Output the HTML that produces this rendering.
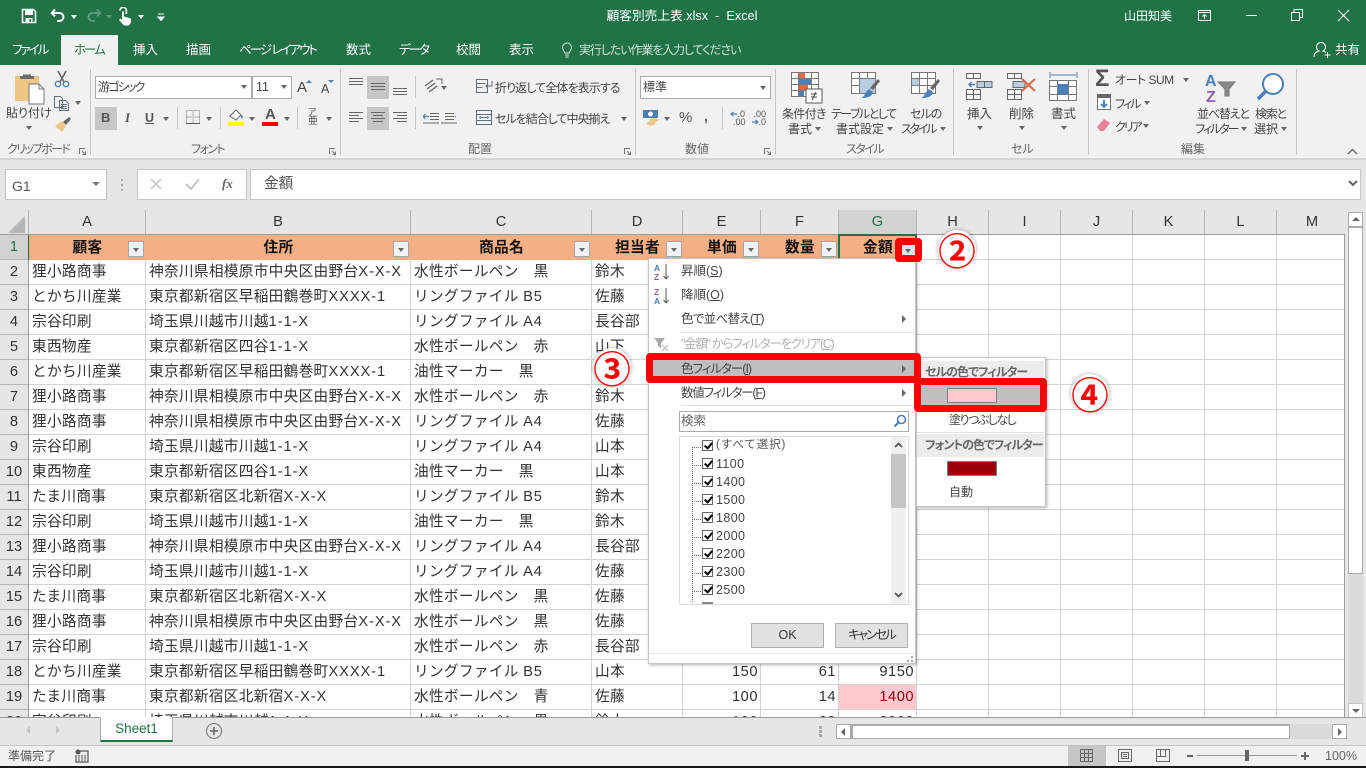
<!DOCTYPE html>
<html lang="ja"><head><meta charset="utf-8"><title>顧客別売上表.xlsx - Excel</title>
<style>
html,body{margin:0;padding:0}
body{width:1366px;height:768px;overflow:hidden;position:relative;background:#e6e6e6;font-family:"Liberation Sans","Noto Sans CJK JP",sans-serif;color:#444}
.a,.t,svg.i{position:absolute}
.t{white-space:nowrap;line-height:16px;font-size:12.5px;font-feature-settings:"palt";color:#444}
.w{color:#fff}
.g{color:#666;font-size:12px}
.c{text-align:center;transform:translateX(-50%)}
.box{position:absolute;background:#fff;border:1px solid #ababab;box-sizing:border-box}
.sep{position:absolute;background:#c6c6c6;width:1px}
.dd{position:absolute;width:0;height:0;border-left:3.5px solid transparent;border-right:3.5px solid transparent;border-top:4px solid #666}
.act{position:absolute;background:#c6c6c6}
table{position:absolute;left:29px;top:235px;border-collapse:separate;border-spacing:0;table-layout:fixed;width:1316px}
td{height:25px;box-sizing:border-box;border-right:1px solid #d4d4d4;border-bottom:1px solid #d4d4d4;padding:0 3px;font-size:14.67px;letter-spacing:.3px;line-height:24px;color:#333;white-space:nowrap;overflow:hidden}
td i{font-style:normal;letter-spacing:.9px}
td.n{text-align:right;padding-right:2px;letter-spacing:.5px}
tr.h td{background:#f4b084;border-right:none;border-bottom:none;font-weight:bold;text-align:center;color:#111}
tr.h td.e{background:#fff;border-right:1px solid #d4d4d4;border-bottom:1px solid #d4d4d4}
.ch{position:absolute;top:210px;height:24px;background:#e6e6e6;border-right:1px solid #b4b4b4;box-sizing:content-box;text-align:center;font-size:14.67px;line-height:24px;color:#333}
.rh{position:absolute;left:0;width:28px;height:24px;border-bottom:1px solid #b4b4b4;background:#e6e6e6;text-align:center;font-size:14.67px;line-height:24px;color:#333}
.fb{position:absolute;top:241px;width:16px;height:16px;box-sizing:border-box;background:#f1f2f7;border:1px solid #a5a5a5}
.fb:after{content:"";position:absolute;left:3.5px;top:5.5px;border-left:3.5px solid transparent;border-right:3.5px solid transparent;border-top:4px solid #666}
.red{position:absolute;border:solid #f00;box-sizing:border-box;border-radius:4px}
.num{position:absolute;width:38px;height:38px;border-radius:50%;background:#fff;box-shadow:0 0 4px rgba(0,0,0,.35);text-align:center;font-size:37.5px;line-height:38px;font-weight:bold;color:#f00;font-family:"Noto Sans CJK JP",sans-serif}
.m{position:absolute;left:681px;white-space:nowrap;line-height:16px;font-size:12.5px;font-feature-settings:"palt";color:#444}
.ck{position:absolute;left:702px;width:11px;height:11px;box-sizing:border-box;border:1px solid #666;background:#fff}
.ck:after{content:"";position:absolute;left:3px;top:0;width:3px;height:6px;border:solid #000;border-width:0 2px 2px 0;transform:rotate(40deg)}
.li{position:absolute;left:716px;font-size:12.5px;line-height:16px;letter-spacing:.4px;color:#444}
.dot{position:absolute;left:692px;width:9px;height:0;border-top:1px dotted #666}
.btn{position:absolute;top:623px;width:73px;height:25px;box-sizing:border-box;background:#e1e1e1;border:1px solid #adadad;text-align:center;font-size:12.5px;line-height:23px;color:#333;font-feature-settings:"palt"}
</style></head><body>

<!-- title bar -->
<div class="a" style="left:0;top:0;width:1366px;height:65px;background:#217346"></div>
<svg class="i" style="left:21px;top:8px" width="16" height="16" viewBox="0 0 16 16"><path d="M1.5 1.5h11l2 2v11h-13z" fill="none" stroke="#fff" stroke-width="1.6"/><rect x="4" y="2" width="8" height="5" fill="#fff"/><rect x="4.5" y="10" width="7" height="4.5" fill="#fff"/><rect x="8.5" y="11" width="1.5" height="3" fill="#217346"/></svg>
<svg class="i" style="left:50px;top:8px" width="16" height="16" viewBox="0 0 16 16"><path d="M5 1.5L1.800 5 5 8.300M2 5h7.500a3.800 3.800 0 0 1 0 8H7" fill="none" stroke="#fff" stroke-width="2"/></svg>
<div class="dd" style="left:71px;top:15px;border-top-color:#fff"></div>
<svg class="i" style="left:86px;top:8px" width="16" height="16" viewBox="0 0 16 16"><path d="M11 1.500L14.200 5 11 8.300M14 5H6.500a3.800 3.800 0 0 0 0 8H9" fill="none" stroke="#5c9a7b" stroke-width="2"/></svg>
<div class="dd" style="left:106px;top:15px;border-top-color:#5c9a7b"></div>
<svg class="i" style="left:117px;top:7px" width="18" height="19" viewBox="0 0 18 19"><path d="M3 3.500a3.200 3.200 0 0 1 6.400 0V7" fill="none" stroke="#fff" stroke-width="1.600"/><path d="M5 4.500h2v5l7 2v4l-2 3H7L2 13l1-1.500 2 1z" fill="#fff"/></svg>
<div class="dd" style="left:138px;top:15px;border-top-color:#fff"></div>
<svg class="i" style="left:157px;top:13px" width="8" height="8" viewBox="0 0 8 8"><path d="M1 1h6M1 4h6l-3 3.500z" fill="#fff" stroke="#fff" stroke-width="1"/></svg>
<div class="t w c" style="left:682px;top:8px;font-size:12.7px">顧客別売上表.xlsx&nbsp; - &nbsp;Excel</div>
<div class="t w" style="left:1124px;top:8px;font-size:12px">山田知美</div>
<svg class="i" style="left:1197px;top:9px" width="15" height="13" viewBox="0 0 15 13"><path d="M1.500 1.500h12v10h-12zM1.500 3.500h12M7.500 10V5.500M5.500 7.500l2-2 2 2" fill="none" stroke="#fff"/></svg>
<div class="a" style="left:1246px;top:15px;width:11px;height:1px;background:#fff"></div>
<svg class="i" style="left:1291px;top:9px" width="13" height="13" viewBox="0 0 13 13"><path d="M.5 3.500h8v8h-8zM3 3.500v-3h8.500v8H8.500" fill="none" stroke="#fff"/></svg>
<svg class="i" style="left:1337px;top:9px" width="13" height="13" viewBox="0 0 13 13"><path d="M1 1l11 11M12 1L1 12" stroke="#fff" stroke-width="1.100"/></svg>

<!-- tabs -->
<div class="a" style="left:61px;top:35px;width:57px;height:30px;background:#f1f1f1"></div>
<div class="t w" style="left:12px;top:42px;letter-spacing:-2px">ファイル</div>
<div class="t" style="left:74px;top:42px;color:#217346;letter-spacing:-2px">ホーム</div>
<div class="t w" style="left:133px;top:42px">挿入</div>
<div class="t w" style="left:186px;top:42px">描画</div>
<div class="t w" style="left:239px;top:42px;letter-spacing:-2px">ページ レイアウト</div>
<div class="t w" style="left:346px;top:42px">数式</div>
<div class="t w" style="left:399px;top:42px;letter-spacing:-2px">データ</div>
<div class="t w" style="left:456px;top:42px">校閲</div>
<div class="t w" style="left:509px;top:42px">表示</div>
<svg class="i" style="left:561px;top:42px" width="12" height="16" viewBox="0 0 12 16"><path d="M3.800 11C3.500 9 1.500 8 1.500 5.500a4.500 4.500 0 0 1 9 0C10.500 8 8.500 9 8.200 11zM4 13h4M4.500 15h3" fill="none" stroke="#d8e6df"/></svg>
<div class="t" style="left:579px;top:42px;color:#d3e3db;font-size:12px;letter-spacing:-1.1px">実行したい作業を入力してください</div>
<svg class="i" style="left:1313px;top:41px" width="19" height="17" viewBox="0 0 19 17"><path d="M1 16c0-4 3-5.500 5-6a4.500 4.500 0 1 1 4 0c1 .2 2 .7 3 1.500M11.500 14h6M14.500 11v6" fill="none" stroke="#fff"/></svg>
<div class="t w" style="left:1335px;top:42px">共有</div>

<!-- ribbon -->
<div class="a" style="left:0;top:65px;width:1366px;height:93px;background:#f1f1f1;border-bottom:2px solid #d5d5d5"></div>
<div class="sep" style="left:90px;top:69px;height:86px"></div>
<div class="sep" style="left:340px;top:69px;height:86px"></div>
<div class="sep" style="left:635px;top:69px;height:86px"></div>
<div class="sep" style="left:775px;top:69px;height:86px"></div>
<div class="sep" style="left:953px;top:69px;height:86px"></div>
<div class="sep" style="left:1088px;top:69px;height:86px"></div>
<div class="sep" style="left:1296px;top:69px;height:86px"></div>

<!-- clipboard -->
<svg class="i" style="left:14px;top:72px" width="32" height="33" viewBox="0 0 32 33"><rect x="1" y="4" width="24" height="25" rx="1" fill="#eec681"/><path d="M9 4V2.500h8V4h3v3H6V4z" fill="#6d6d6d"/><path d="M15 12h10l5 5v15H15z" fill="#fff" stroke="#777"/><path d="M25 12v5h5" fill="none" stroke="#777"/></svg>
<div class="t" style="left:6px;top:105px;font-size:12px">貼り付け</div>
<div class="dd" style="left:26px;top:126px"></div>
<svg class="i" style="left:54px;top:70px" width="16" height="18" viewBox="0 0 16 18"><path d="M4 1l6 11M12 1L6 12" stroke="#666" stroke-width="1.600"/><circle cx="4" cy="14" r="2.700" fill="none" stroke="#4a7fb8" stroke-width="1.400"/><circle cx="12" cy="14" r="2.700" fill="none" stroke="#4a7fb8" stroke-width="1.400"/></svg>
<svg class="i" style="left:54px;top:95px" width="16" height="16" viewBox="0 0 16 16"><path d="M.5 1.500h6l2 2v9h-8z M5.500 5.500h6l3 3v7h-9z" fill="#f1f1f1" stroke="#5f6f80"/><path d="M7 9.500h6M7 11.500h6M7 13.500h6" stroke="#5f6f80"/></svg>
<div class="dd" style="left:75px;top:101px"></div>
<svg class="i" style="left:54px;top:116px" width="18" height="17" viewBox="0 0 18 17"><path d="M9 6l6-5 2 2-5 6z" fill="#666"/><path d="M1 10l7-5 4 5-4 6z" fill="#eec681"/></svg>
<div class="t g" style="left:7px;top:141px;letter-spacing:-1.7px">クリップボード</div>
<svg class="i" style="left:79px;top:148px" width="7" height="7" viewBox="0 0 7 7"><path d="M.5 6V.5H6M6.500 6.500L3 3M6.500 3.500v3h-3" fill="none" stroke="#777"/></svg>

<!-- font -->
<div class="box" style="left:95px;top:76px;width:157px;height:23px"></div>
<div class="box" style="left:252px;top:76px;width:40px;height:23px"></div>
<div class="t" style="left:98px;top:79px;font-size:12px;letter-spacing:-1.8px">游ゴシック</div>
<div class="t" style="left:256px;top:79px;font-size:12.5px">11</div>
<div class="dd" style="left:241px;top:85px"></div><div class="dd" style="left:281px;top:85px"></div>
<div class="t" style="left:297px;top:80px;font-size:15px">A</div><div class="a" style="left:306px;top:80px;border-left:3px solid transparent;border-right:3px solid transparent;border-bottom:3px solid #4a7fb8"></div>
<div class="t" style="left:321px;top:81px;font-size:12.500px">A</div><div class="a" style="left:328px;top:80px;border-left:3px solid transparent;border-right:3px solid transparent;border-top:3px solid #4a7fb8"></div>
<div class="act" style="left:95px;top:107px;width:22px;height:23px"></div>
<div class="t" style="left:101px;top:110px;font-weight:bold;font-size:13px;color:#555">B</div>
<div class="t" style="left:125px;top:110px;font-style:italic;font-family:'Liberation Serif',serif;font-weight:bold;font-size:13px;color:#555">I</div>
<div class="t" style="left:145px;top:110px;font-weight:bold;font-size:12.500px;color:#555;text-decoration:underline">U</div>
<div class="dd" style="left:163px;top:117px"></div>
<div class="sep" style="left:177px;top:107px;height:22px"></div>
<svg class="i" style="left:186px;top:110px" width="14" height="14" viewBox="0 0 14 14"><path d="M.5.500h13v13H.500zM7 .500v13M.500 7h13" fill="none" stroke="#777" stroke-dasharray="1 1"/><path d="M0 13.500h14" stroke="#555"/></svg>
<div class="dd" style="left:206px;top:117px"></div>
<div class="sep" style="left:220px;top:107px;height:22px"></div>
<svg class="i" style="left:228px;top:109px" width="17" height="13" viewBox="0 0 17 13"><path d="M2 7l6-6 5 5-5 5z" fill="#fff" stroke="#666"/><path d="M12 5l3 2.500-1 3z" fill="#4a7fb8"/></svg>
<div class="a" style="left:228px;top:122px;width:16px;height:4px;background:#ff0"></div>
<div class="dd" style="left:249px;top:117px"></div>
<div class="t" style="left:265px;top:107px;font-size:15px;font-weight:bold;color:#555">A</div>
<div class="a" style="left:262px;top:122px;width:16px;height:4px;background:#f00"></div>
<div class="dd" style="left:284px;top:117px"></div>
<div class="sep" style="left:297px;top:107px;height:22px"></div>
<div class="t" style="left:308px;top:107px;font-size:9px;line-height:11px;color:#555">ア</div>
<div class="t" style="left:308px;top:116px;font-size:10px;line-height:11px;color:#555">亜</div>
<div class="dd" style="left:326px;top:117px"></div>
<div class="t g" style="left:191px;top:141px;letter-spacing:-1.6px">フォント</div>
<svg class="i" style="left:329px;top:148px" width="7" height="7" viewBox="0 0 7 7"><path d="M.5 6V.5H6M6.500 6.500L3 3M6.500 3.500v3h-3" fill="none" stroke="#777"/></svg>

<!-- alignment -->
<div class="act" style="left:367px;top:76px;width:22px;height:23px"></div>
<div class="act" style="left:367px;top:107px;width:22px;height:23px"></div>
<svg class="i" style="left:349px;top:78px" width="60" height="18" viewBox="0 0 60 18"><path d="M0 .500h14M0 3.500h14M0 6.500h14M22 5.500h14M22 8.500h14M22 11.500h14M44 10.500h14M44 13.500h14M44 16.500h14" stroke="#666"/></svg>
<svg class="i" style="left:349px;top:112px" width="60" height="13" viewBox="0 0 60 13"><path d="M0 .500h14M0 3.500h10M0 6.500h14M0 9.500h10M22 .500h14M24 3.500h10M22 6.500h14M24 9.500h10M44 .500h14M48 3.500h10M44 6.500h14M48 9.500h10" stroke="#666"/></svg>
<div class="sep" style="left:415px;top:76px;height:22px"></div>
<div class="sep" style="left:415px;top:107px;height:22px"></div>
<svg class="i" style="left:423px;top:77px" width="21" height="17" viewBox="0 0 21 17"><path d="M2 9l8-6M4 12l8-6M6 15l8-6" stroke="#666" stroke-width="1.300" fill="none"/><path d="M13 2h6v5" stroke="#666" fill="none"/></svg>
<div class="dd" style="left:441px;top:86px"></div>
<svg class="i" style="left:423px;top:113px" width="34" height="11" viewBox="0 0 34 11"><path d="M7 .500h9M7 3.500h9M7 6.500h9M0 10h16M22 .500h9M22 3.500h9M22 6.500h9M18 10h16" stroke="#666" fill="none"/><path d="M0 3.500h6M2.500 1l-2.500 2.500 2.500 2.500M33 3.500h-1" stroke="#4a7fb8" fill="none" stroke-width="1.200"/></svg>
<svg class="i" style="left:476px;top:79px" width="17" height="15" viewBox="0 0 17 15"><path d="M.5.500h11v13H.500zM.500 4.500h9M.500 8.500h6M16 2v5h-6M12 5l-2 2 2 2" fill="none" stroke="#5f6f80"/></svg>
<div class="t" style="left:495px;top:80px;font-size:12px;letter-spacing:-.9px">折り返して全体を表示する</div>
<svg class="i" style="left:476px;top:110px" width="16" height="15" viewBox="0 0 16 15"><path d="M.5.500h15v14H.500zM.500 4.500h15M.500 10.500h15M3 7.500h10" fill="none" stroke="#5f6f80"/><path d="M3 7.500l2-1.500v3zM13 7.500l-2-1.500v3z" fill="#4a7fb8"/></svg>
<div class="t" style="left:495px;top:111px;font-size:12px;letter-spacing:-1px">セルを結合して中央揃え</div>
<div class="dd" style="left:621px;top:117px"></div>
<div class="t g" style="left:468px;top:141px">配置</div>
<svg class="i" style="left:624px;top:148px" width="7" height="7" viewBox="0 0 7 7"><path d="M.5 6V.5H6M6.500 6.500L3 3M6.500 3.500v3h-3" fill="none" stroke="#777"/></svg>

<!-- number -->
<div class="box" style="left:640px;top:76px;width:131px;height:23px"></div>
<div class="t" style="left:643px;top:79px;font-size:12px">標準</div>
<div class="dd" style="left:760px;top:86px"></div>
<svg class="i" style="left:643px;top:109px" width="17" height="17" viewBox="0 0 17 17"><rect x="0" y="1" width="15" height="8" fill="#4a7fb8"/><circle cx="7.500" cy="5" r="2.500" fill="#fff"/><ellipse cx="11" cy="11" rx="4.500" ry="2" fill="#eec681"/><ellipse cx="8" cy="14.500" rx="4.500" ry="2" fill="#eec681"/></svg>
<div class="dd" style="left:664px;top:117px"></div>
<div class="t" style="left:679px;top:110px;font-size:15px;color:#555">%</div>
<div class="t" style="left:704px;top:108px;font-size:14px;font-weight:bold;color:#555">,</div>
<div class="sep" style="left:722px;top:107px;height:22px"></div>
<div class="t" style="left:733px;top:110px;width:12px;text-align:right;font-size:9px;line-height:8px;color:#555">.0<br>.00</div>
<div class="t" style="left:753px;top:110px;width:13px;text-align:right;font-size:9px;line-height:8px;color:#555">.00<br>.0</div>
<svg class="i" style="left:729px;top:111px" width="36" height="14" viewBox="0 0 36 14"><path d="M2 3h6M4.500 1L2 3l2.500 2M23 11h6M26.500 9l2.500 2-2.500 2" fill="none" stroke="#4a7fb8" stroke-width="1.200"/></svg>
<div class="t g" style="left:685px;top:141px">数値</div>
<svg class="i" style="left:764px;top:148px" width="7" height="7" viewBox="0 0 7 7"><path d="M.5 6V.5H6M6.500 6.500L3 3M6.500 3.500v3h-3" fill="none" stroke="#777"/></svg>

<!-- styles -->
<svg class="i" style="left:791px;top:72px" width="32" height="32" viewBox="0 0 32 32"><path d="M.5.500h27v24H.500zM7.500.500v24M20.500.500v24M.500 6.500h27M.500 12.500h27M.500 18.500h27" fill="#fff" stroke="#777"/><path d="M8 1h6v5H8z" fill="#de6a47"/><path d="M8 7h12v5H8z" fill="#4a7fb8"/><path d="M8 13h9v5H8z" fill="#de6a47"/><path d="M8 19h5v5H8z" fill="#4a7fb8"/><rect x="15" y="17" width="16" height="14" fill="#fff" stroke="#555"/><path d="M20 22h6M20 25h6M25 20l-4 8" stroke="#444"/></svg>
<div class="t" style="left:782px;top:106px;font-size:12px;letter-spacing:-.7px">条件付き</div>
<div class="t" style="left:788px;top:121px;font-size:12px">書式</div><div class="dd" style="left:815px;top:127px"></div>
<svg class="i" style="left:851px;top:72px" width="30" height="32" viewBox="0 0 30 32"><path d="M.5.500h24v21H.500zM.500 6.500h24M.500 13.500h24M8.500.500v21M16.500.500v21" fill="#fff" stroke="#777"/><rect x="9" y="7" width="15" height="14" fill="#b8cce4"/><path d="M27 7l2 2-7 9-3-2z" fill="#666"/><path d="M18 17l4 3c-1 5-6 6-12 6 3-1 4-4 5-6z" fill="#4a7fb8"/></svg>
<div class="t" style="left:831px;top:106px;font-size:12px;letter-spacing:-1.5px">テーブルとして</div>
<div class="t" style="left:836px;top:121px;font-size:12px">書式設定</div><div class="dd" style="left:887px;top:127px"></div>
<svg class="i" style="left:911px;top:72px" width="30" height="32" viewBox="0 0 30 32"><path d="M.5.500h24v21H.500zM.500 6.500h24M.500 13.500h24M8.500.500v21M16.500.500v21" fill="#fff" stroke="#777"/><rect x="1" y="7" width="7" height="6" fill="#b8cce4"/><path d="M27 7l2 2-7 9-3-2z" fill="#666"/><path d="M18 17l4 3c-1 5-6 6-12 6 3-1 4-4 5-6z" fill="#4a7fb8"/></svg>
<div class="t" style="left:910px;top:106px;font-size:12px;letter-spacing:-1px">セルの</div>
<div class="t" style="left:901px;top:121px;font-size:12px;letter-spacing:-2.2px">スタイル</div><div class="dd" style="left:940px;top:127px"></div>
<div class="t g" style="left:846px;top:141px;letter-spacing:-1.5px">スタイル</div>

<!-- cells -->
<svg class="i" style="left:966px;top:73px" width="27" height="27" viewBox="0 0 27 27"><path d="M.5.500h14v5H.500zM7.500.500v5M.500 16.500h14v10H.500zM7.500 16.500v10M.500 21.500h14" fill="none" stroke="#666"/><rect x="11" y="8.500" width="15" height="6" fill="#b8cce4" stroke="#666"/><path d="M18.500 8.500v6" stroke="#666"/><path d="M9 11.500H3M5.500 9L3 11.500 5.500 14" fill="none" stroke="#4a7fb8" stroke-width="1.400"/></svg>
<div class="t" style="left:967px;top:106px;font-size:12.500px">挿入</div><div class="dd" style="left:977px;top:126px"></div>
<svg class="i" style="left:1007px;top:73px" width="30" height="28" viewBox="0 0 30 28"><path d="M.5.500h14v5H.500zM7.500.500v5M.500 16.500h14v10H.500zM7.500 16.500v10M.500 21.500h14" fill="none" stroke="#666"/><rect x="6" y="8.500" width="12" height="6" fill="#b8cce4" stroke="#666"/><path d="M15 6l13 12M28 6L15 18" stroke="#de6a47" stroke-width="2.200"/></svg>
<div class="t" style="left:1009px;top:106px;font-size:12.500px">削除</div><div class="dd" style="left:1019px;top:126px"></div>
<svg class="i" style="left:1049px;top:71px" width="29" height="32" viewBox="0 0 29 32"><path d="M1 1v6M28 1v6M2 4h25" stroke="#4a7fb8" fill="none"/><path d="M.5 9.500h27v20H.500zM8.500 9.500v20M19.500 9.500v20M.500 15.500h27M.500 23.500h27" fill="#fff" stroke="#777"/><rect x="9" y="13" width="10" height="10" fill="#4a7fb8"/></svg>
<div class="t" style="left:1051px;top:106px;font-size:12.500px">書式</div><div class="dd" style="left:1061px;top:126px"></div>
<div class="t g" style="left:1011px;top:141px">セル</div>

<!-- editing -->
<div class="t" style="left:1095px;top:66px;font-size:24px;line-height:26px;color:#555;font-weight:bold">Σ</div>
<div class="t" style="left:1115px;top:72px;font-size:12px;letter-spacing:-.5px">オート SUM</div><div class="dd" style="left:1183px;top:78px"></div>
<svg class="i" style="left:1097px;top:94px" width="15" height="16" viewBox="0 0 15 16"><rect x=".5" y=".5" width="13" height="15" fill="#fff" stroke="#777"/><rect width="14" height="4" fill="#666"/><path d="M7 6v7M4 10l3 3 3-3" fill="none" stroke="#4a7fb8" stroke-width="1.800"/></svg>
<div class="t" style="left:1115px;top:96px;font-size:12px;letter-spacing:-2px">フィル</div><div class="dd" style="left:1144px;top:101px"></div>
<svg class="i" style="left:1096px;top:118px" width="16" height="14" viewBox="0 0 16 14"><path d="M1 9l7-8 6 4-6 8H4z" fill="#e98298"/></svg>
<div class="t" style="left:1115px;top:119px;font-size:12px;letter-spacing:-2px">クリア</div><div class="dd" style="left:1143px;top:124px"></div>
<svg class="i" style="left:1205px;top:72px" width="32" height="30" viewBox="0 0 32 30"><text x="0" y="14" font-family="Liberation Sans,sans-serif" font-size="16" font-weight="bold" fill="#4a7fb8">A</text><text x="1" y="30" font-family="Liberation Sans,sans-serif" font-size="16" font-weight="bold" fill="#8f5fb8">Z</text><path d="M13 10h17l-6 7v7h-4v-7z" fill="#8a8a8a" stroke="#777"/></svg>
<div class="t" style="left:1197px;top:106px;font-size:12px;letter-spacing:-1.2px">並べ替えと</div>
<div class="t" style="left:1195px;top:121px;font-size:12px;letter-spacing:-2px">フィルター</div><div class="dd" style="left:1241px;top:127px"></div>
<svg class="i" style="left:1256px;top:72px" width="30" height="30" viewBox="0 0 30 30"><circle cx="17" cy="12" r="10" fill="#fff" stroke="#4a7fb8" stroke-width="2"/><path d="M10 19L2 27" stroke="#4a7fb8" stroke-width="3.500"/></svg>
<div class="t" style="left:1255px;top:106px;font-size:12px;letter-spacing:-1.3px">検索と</div>
<div class="t" style="left:1254px;top:121px;font-size:12px">選択</div><div class="dd" style="left:1281px;top:127px"></div>
<div class="t g" style="left:1181px;top:141px">編集</div>
<svg class="i" style="left:1347px;top:148px" width="11" height="7" viewBox="0 0 11 7"><path d="M1 6l4.500-4.500L10 6" fill="none" stroke="#666" stroke-width="1.400"/></svg>

<!-- formula bar -->
<div class="box" style="left:5px;top:169px;width:102px;height:31px;border-color:#c6c6c6"></div>
<div class="t" style="left:12px;top:178px;font-size:14px;color:#555">G1</div>
<div class="dd" style="left:92px;top:182px;border-left-width:4px;border-right-width:4px;border-top-color:#777"></div>
<div class="a" style="left:121px;top:179px;width:2px;height:2px;background:#aaa;box-shadow:0 5px #aaa,0 10px #aaa"></div>
<div class="box" style="left:137px;top:169px;width:110px;height:31px;border-color:#c6c6c6"></div>
<svg class="i" style="left:150px;top:178px" width="12" height="12" viewBox="0 0 12 12"><path d="M1 1l10 10M11 1L1 11" stroke="#c4c4c4" stroke-width="1.500"/></svg>
<svg class="i" style="left:185px;top:178px" width="15" height="13" viewBox="0 0 15 13"><path d="M1 6l5 5 8-10" stroke="#c4c4c4" stroke-width="2" fill="none"/></svg>
<div class="t" style="left:222px;top:176px;font-family:'Liberation Serif',serif;font-style:italic;font-weight:bold;font-size:13px;color:#666">fx</div>
<div class="box" style="left:250px;top:169px;width:1111px;height:31px;border-color:#c6c6c6"></div>
<div class="t" style="left:264px;top:176px;font-size:14.670px;color:#555;font-feature-settings:normal">金額</div>
<svg class="i" style="left:1348px;top:180px" width="10" height="8" viewBox="0 0 10 8"><path d="M1 1l4 4 4-4" fill="none" stroke="#666" stroke-width="2"/></svg>

<!-- grid headers -->
<div class="a" style="left:0;top:210px;width:28px;height:24px;border-right:1px solid #b4b4b4;border-bottom:1px solid #9c9c9c"></div>
<div class="a" style="left:8px;top:216px;width:0;height:0;border-left:17px solid transparent;border-bottom:17px solid #b5b5b5"></div>
<div class="ch" style="left:29px;width:116px">A</div>
<div class="ch" style="left:146px;width:264px">B</div>
<div class="ch" style="left:411px;width:180px">C</div>
<div class="ch" style="left:592px;width:90px">D</div>
<div class="ch" style="left:683px;width:77px">E</div>
<div class="ch" style="left:761px;width:77px">F</div>
<div class="ch" style="left:839px;width:77px;background:#d2d2d2;color:#217346">G</div>
<div class="ch" style="left:917px;width:71px">H</div>
<div class="ch" style="left:989px;width:71px">I</div>
<div class="ch" style="left:1061px;width:71px">J</div>
<div class="ch" style="left:1133px;width:71px">K</div>
<div class="ch" style="left:1205px;width:71px">L</div>
<div class="ch" style="left:1277px;width:70px;border-right:none">M</div>
<div class="a" style="left:0;top:234px;width:1345px;height:1px;background:#9c9c9c"></div>

<!-- sheet -->
<div class="a" style="left:29px;top:235px;width:1316px;height:482px;background:#fff;overflow:hidden">
<table style="left:0;top:0">
<colgroup><col style="width:117px"><col style="width:265px"><col style="width:181px"><col style="width:91px"><col style="width:78px"><col style="width:78px"><col style="width:78px"><col style="width:72px"><col style="width:72px"><col style="width:72px"><col style="width:72px"><col style="width:72px"><col style="width:68px"></colgroup>
<tr class="h"><td>顧客</td><td>住所</td><td>商品名</td><td>担当者</td><td>単価</td><td>数量</td><td>金額</td><td class="e"></td><td class="e"></td><td class="e"></td><td class="e"></td><td class="e"></td><td class="e" style="border-right:none"></td></tr>
<tr><td>狸小路商事</td><td>神奈川県相模原市中央区由野台<i>X-X-X</i></td><td>水性ボールペン　黒</td><td>鈴木</td><td></td><td></td><td></td><td></td><td></td><td></td><td></td><td></td><td></td></tr>
<tr><td>とかち川産業</td><td>東京都新宿区早稲田鶴巻町<i>XXXX-1</i></td><td>リングファイル <i>B5</i></td><td>佐藤</td><td></td><td></td><td style="background:#ffc7ce"></td><td></td><td></td><td></td><td></td><td></td><td></td></tr>
<tr><td>宗谷印刷</td><td>埼玉県川越市川越<i>1-1-X</i></td><td>リングファイル <i>A4</i></td><td>長谷部</td><td></td><td></td><td></td><td></td><td></td><td></td><td></td><td></td><td></td></tr>
<tr><td>東西物産</td><td>東京都新宿区四谷<i>1-1-X</i></td><td>水性ボールペン　赤</td><td>山下</td><td></td><td></td><td></td><td></td><td></td><td></td><td></td><td></td><td></td></tr>
<tr><td>とかち川産業</td><td>東京都新宿区早稲田鶴巻町<i>XXXX-1</i></td><td>油性マーカー　黒</td><td>山下</td><td></td><td></td><td></td><td></td><td></td><td></td><td></td><td></td><td></td></tr>
<tr><td>狸小路商事</td><td>神奈川県相模原市中央区由野台<i>X-X-X</i></td><td>水性ボールペン　赤</td><td>鈴木</td><td></td><td></td><td></td><td></td><td></td><td></td><td></td><td></td><td></td></tr>
<tr><td>狸小路商事</td><td>神奈川県相模原市中央区由野台<i>X-X-X</i></td><td>リングファイル <i>A4</i></td><td>佐藤</td><td></td><td></td><td></td><td></td><td></td><td></td><td></td><td></td><td></td></tr>
<tr><td>宗谷印刷</td><td>埼玉県川越市川越<i>1-1-X</i></td><td>リングファイル <i>A4</i></td><td>山本</td><td></td><td></td><td></td><td></td><td></td><td></td><td></td><td></td><td></td></tr>
<tr><td>東西物産</td><td>東京都新宿区四谷<i>1-1-X</i></td><td>油性マーカー　黒</td><td>山本</td><td></td><td></td><td></td><td></td><td></td><td></td><td></td><td></td><td></td></tr>
<tr><td>たま川商事</td><td>東京都新宿区北新宿<i>X-X-X</i></td><td>リングファイル <i>B5</i></td><td>鈴木</td><td></td><td></td><td></td><td></td><td></td><td></td><td></td><td></td><td></td></tr>
<tr><td>宗谷印刷</td><td>埼玉県川越市川越<i>1-1-X</i></td><td>油性マーカー　黒</td><td>鈴木</td><td></td><td></td><td></td><td></td><td></td><td></td><td></td><td></td><td></td></tr>
<tr><td>狸小路商事</td><td>神奈川県相模原市中央区由野台<i>X-X-X</i></td><td>リングファイル <i>A4</i></td><td>長谷部</td><td></td><td></td><td></td><td></td><td></td><td></td><td></td><td></td><td></td></tr>
<tr><td>宗谷印刷</td><td>埼玉県川越市川越<i>1-1-X</i></td><td>リングファイル <i>A4</i></td><td>佐藤</td><td></td><td></td><td></td><td></td><td></td><td></td><td></td><td></td><td></td></tr>
<tr><td>たま川商事</td><td>東京都新宿区北新宿<i>X-X-X</i></td><td>水性ボールペン　黒</td><td>佐藤</td><td></td><td></td><td></td><td></td><td></td><td></td><td></td><td></td><td></td></tr>
<tr><td>狸小路商事</td><td>神奈川県相模原市中央区由野台<i>X-X-X</i></td><td>水性ボールペン　黒</td><td>佐藤</td><td></td><td></td><td></td><td></td><td></td><td></td><td></td><td></td><td></td></tr>
<tr><td>宗谷印刷</td><td>埼玉県川越市川越<i>1-1-X</i></td><td>水性ボールペン　赤</td><td>長谷部</td><td></td><td></td><td></td><td></td><td></td><td></td><td></td><td></td><td></td></tr>
<tr><td>とかち川産業</td><td>東京都新宿区早稲田鶴巻町<i>XXXX-1</i></td><td>リングファイル <i>B5</i></td><td>山本</td><td class="n">150</td><td class="n">61</td><td class="n">9150</td><td></td><td></td><td></td><td></td><td></td><td></td></tr>
<tr><td>たま川商事</td><td>東京都新宿区北新宿<i>X-X-X</i></td><td>水性ボールペン　青</td><td>佐藤</td><td class="n">100</td><td class="n">14</td><td class="n" style="background:#ffc7ce;color:#9c0006">1400</td><td></td><td></td><td></td><td></td><td></td><td></td></tr>
<tr><td>宗谷印刷</td><td>埼玉県川越市川越<i>1-1-X</i></td><td>水性ボールペン　黒</td><td>鈴木</td><td class="n">100</td><td class="n">29</td><td class="n">2900</td><td></td><td></td><td></td><td></td><td></td><td></td></tr>
</table>
</div>

<!-- row headers -->
<div class="a" style="left:28px;top:235px;width:1px;height:482px;background:#9c9c9c"></div>
<div class="rh" style="top:235px;background:#d2d2d2;color:#217346">1</div>
<div class="rh" style="top:260px">2</div><div class="rh" style="top:285px">3</div><div class="rh" style="top:310px">4</div><div class="rh" style="top:335px">5</div><div class="rh" style="top:360px">6</div><div class="rh" style="top:385px">7</div><div class="rh" style="top:410px">8</div><div class="rh" style="top:435px">9</div><div class="rh" style="top:460px">10</div><div class="rh" style="top:485px">11</div><div class="rh" style="top:510px">12</div><div class="rh" style="top:535px">13</div><div class="rh" style="top:560px">14</div><div class="rh" style="top:585px">15</div><div class="rh" style="top:610px">16</div><div class="rh" style="top:635px">17</div><div class="rh" style="top:660px">18</div><div class="rh" style="top:685px">19</div><div class="rh" style="top:710px;height:7px;overflow:hidden;border:none">20</div>

<!-- selection + filter buttons -->
<div class="a" style="left:838px;top:234px;width:79px;height:26px;box-sizing:border-box;border:2px solid #217346;border-bottom:none"></div>
<div class="a" style="left:28px;top:235px;width:1px;height:25px;background:#217346"></div>
<div class="fb" style="left:128px"></div><div class="fb" style="left:393px"></div><div class="fb" style="left:574px"></div><div class="fb" style="left:666px"></div><div class="fb" style="left:743px"></div><div class="fb" style="left:821px"></div>

<!-- sheet frame -->
<div class="a" style="left:1344px;top:235px;width:1px;height:482px;background:#9c9c9c"></div>

<!-- vertical scrollbar -->
<div class="a" style="left:1348px;top:212px;width:15px;height:505px;background:#dadada"></div>
<div class="box" style="left:1348px;top:212px;width:15px;height:15px;border-color:#ababab"></div>
<div class="a" style="left:1352px;top:217px;border-left:4px solid transparent;border-right:4px solid transparent;border-bottom:4px solid #666"></div>
<div class="box" style="left:1348px;top:227px;width:15px;height:347px;border-color:#ababab"></div>
<div class="box" style="left:1348px;top:703px;width:15px;height:15px;border-color:#c6c6c6"></div>
<div class="a" style="left:1352px;top:709px;border-left:4px solid transparent;border-right:4px solid transparent;border-top:4px solid #666"></div>

<!-- dropdown menu -->
<div class="a" style="left:648px;top:258px;width:268px;height:406px;box-sizing:border-box;background:#fff;border:1px solid #c6c6c6;box-shadow:1px 1px 3px rgba(0,0,0,.3)"></div>
<svg class="i" style="left:654px;top:263px" width="16" height="18" viewBox="0 0 16 18"><text x="0" y="8" font-family="Liberation Sans,sans-serif" font-size="8.500" font-weight="bold" fill="#4a7fb8">A</text><text x="0" y="17" font-family="Liberation Sans,sans-serif" font-size="8.500" font-weight="bold" fill="#8f5fb8">Z</text><path d="M12 1v15M9.500 13l2.500 3 2.500-3" fill="none" stroke="#555"/></svg>
<svg class="i" style="left:654px;top:287px" width="16" height="18" viewBox="0 0 16 18"><text x="0" y="8" font-family="Liberation Sans,sans-serif" font-size="8.500" font-weight="bold" fill="#8f5fb8">Z</text><text x="0" y="17" font-family="Liberation Sans,sans-serif" font-size="8.500" font-weight="bold" fill="#4a7fb8">A</text><path d="M12 1v15M9.500 13l2.500 3 2.500-3" fill="none" stroke="#555"/></svg>
<div class="m" style="top:263px">昇順(<u>S</u>)</div>
<div class="m" style="top:287px">降順(<u>O</u>)</div>
<div class="m" style="top:311px;letter-spacing:-.7px">色で並べ替え(<u>T</u>)</div>
<div class="a" style="left:902px;top:315px;border-top:4px solid transparent;border-bottom:4px solid transparent;border-left:4px solid #666"></div>
<div class="a" style="left:681px;top:332px;width:233px;height:1px;background:#e1e1e1"></div>
<svg class="i" style="left:654px;top:337px" width="16" height="15" viewBox="0 0 16 15"><path d="M0 1h11L7 6v5L4 9V6z" fill="#a8a8a8"/><path d="M8 8l6 6M14 8l-6 6" stroke="#c4c4c4" stroke-width="1.300"/></svg>
<div class="m" style="top:336px;color:#b1b1b1;letter-spacing:-1.300px">"金額" からフィルターをクリア(<u>C</u>)</div>
<div class="a" style="left:653px;top:360px;width:262px;height:17px;background:#bfbfbf"></div>
<div class="m" style="top:361px;letter-spacing:-1px">色フィルター(<u>I</u>)</div>
<div class="a" style="left:902px;top:365px;border-top:4px solid transparent;border-bottom:4px solid transparent;border-left:4px solid #666"></div>
<div class="m" style="top:385px;letter-spacing:-1.200px">数値フィルター(<u>F</u>)</div>
<div class="a" style="left:902px;top:389px;border-top:4px solid transparent;border-bottom:4px solid transparent;border-left:4px solid #666"></div>
<div class="a" style="left:681px;top:405px;width:233px;height:1px;background:#e1e1e1"></div>
<div class="box" style="left:679px;top:411px;width:230px;height:21px;border-color:#ababab"></div>
<div class="t" style="left:681px;top:413px;font-size:12.500px;color:#666">検索</div>
<svg class="i" style="left:893px;top:414px" width="14" height="14" viewBox="0 0 14 14"><circle cx="8.500" cy="5.500" r="4" fill="#fff" stroke="#4a7fb8" stroke-width="1.600"/><path d="M5.500 8.500L1.500 12.500" stroke="#4a7fb8" stroke-width="2.200"/></svg>
<div class="box" style="left:679px;top:436px;width:230px;height:169px;border-color:#dcdcdc"></div>
<div class="a" style="left:692px;top:447px;width:0;height:155px;border-left:1px dotted #666"></div>
<div class="dot" style="top:447px"></div><div class="dot" style="top:465px"></div><div class="dot" style="top:483px"></div><div class="dot" style="top:501px"></div><div class="dot" style="top:519px"></div><div class="dot" style="top:537px"></div><div class="dot" style="top:555px"></div><div class="dot" style="top:573px"></div><div class="dot" style="top:591px"></div>
<div class="ck" style="top:440px"></div><div class="ck" style="top:458px"></div><div class="ck" style="top:476px"></div><div class="ck" style="top:494px"></div><div class="ck" style="top:512px"></div><div class="ck" style="top:530px"></div><div class="ck" style="top:548px"></div><div class="ck" style="top:566px"></div><div class="ck" style="top:584px"></div>
<div class="a" style="left:702px;top:602px;width:11px;height:2px;background:#888"></div>
<div class="li" style="top:437px;font-size:11.500px;color:#555;letter-spacing:.9px">(すべて選択)</div>
<div class="li" style="top:456px">1100</div><div class="li" style="top:474px">1400</div><div class="li" style="top:492px">1500</div><div class="li" style="top:510px">1800</div><div class="li" style="top:528px">2000</div><div class="li" style="top:546px">2200</div><div class="li" style="top:564px">2300</div><div class="li" style="top:582px">2500</div>
<div class="a" style="left:891px;top:437px;width:15px;height:167px;background:#f0f0f0"></div>
<div class="a" style="left:891px;top:454px;width:15px;height:54px;background:#c6c6c6"></div>
<svg class="i" style="left:894px;top:442px" width="9" height="6" viewBox="0 0 9 6"><path d="M1 5l3.500-3.500L8 5" fill="none" stroke="#555" stroke-width="1.800"/></svg>
<svg class="i" style="left:894px;top:592px" width="9" height="6" viewBox="0 0 9 6"><path d="M1 1l3.500 3.500L8 1" fill="none" stroke="#555" stroke-width="1.800"/></svg>
<div class="btn" style="left:751px">OK</div>
<div class="btn" style="left:835px;letter-spacing:-2px">キャンセル</div>
<div class="a" style="left:649px;top:653px;width:266px;height:1px;background:#e6eaee"></div>
<div class="a" style="left:911px;top:656px;width:2px;height:2px;background:#aaa;box-shadow:-4px 4px #aaa,0 4px #aaa"></div>

<!-- submenu -->
<div class="a" style="left:916px;top:357px;width:130px;height:150px;box-sizing:border-box;background:#fff;border:1px solid #c6c6c6;box-shadow:1px 1px 3px rgba(0,0,0,.3)"></div>
<div class="a" style="left:917px;top:361px;width:127px;height:23px;background:#ececec"></div>
<div class="t" style="left:925px;top:364px;font-size:12px;font-weight:bold;color:#666;letter-spacing:-1px">セルの色でフィルター</div>
<div class="a" style="left:921px;top:385px;width:119px;height:21px;background:#bfbfbf"></div>
<div class="a" style="left:947px;top:388px;width:50px;height:15px;box-sizing:border-box;background:#ffc7ce;border:1px solid #7f7f7f"></div>
<div class="t" style="left:949px;top:412px;font-size:12px;letter-spacing:-1.500px">塗りつぶしなし</div>
<div class="a" style="left:917px;top:432px;width:127px;height:1px;background:#e1e1e1"></div>
<div class="a" style="left:917px;top:434px;width:127px;height:23px;background:#ececec"></div>
<div class="t" style="left:925px;top:437px;font-size:12px;font-weight:bold;color:#666;letter-spacing:-1.100px">フォントの色でフィルター</div>
<div class="a" style="left:947px;top:461px;width:50px;height:15px;box-sizing:border-box;background:#9c0006;border:1px solid #7f7f7f"></div>
<div class="t" style="left:949px;top:484px;font-size:12px">自動</div>

<!-- G1 filter button + annotations -->
<div class="fb" style="left:900px;top:242px;width:17px;height:16px;background:#dfe3ea"></div>
<div class="red" style="left:895px;top:238px;width:27px;height:24px;border-width:7px;background:transparent"></div>
<div class="red" style="left:646px;top:353px;width:275px;height:30px;border-width:7px"></div>
<div class="red" style="left:914px;top:378px;width:133px;height:34px;border-width:7px"></div>
<div class="num" style="left:938px;top:230px">②</div>
<div class="num" style="left:593px;top:348px">③</div>
<div class="num" style="left:1071px;top:374px">④</div>

<!-- tabs bar -->
<div class="a" style="left:0;top:717px;width:1366px;height:28px;background:#e6e6e6;border-top:1px solid #9c9c9c;box-sizing:border-box"></div>
<div class="a" style="left:26px;top:726px;border-top:4px solid transparent;border-bottom:4px solid transparent;border-right:4px solid #c6c6c6"></div>
<div class="a" style="left:56px;top:726px;border-top:4px solid transparent;border-bottom:4px solid transparent;border-left:4px solid #c6c6c6"></div>
<div class="a" style="left:100px;top:717px;width:73px;height:25px;box-sizing:border-box;background:#fff;border:1px solid #ababab;border-top:none;border-bottom:2px solid #217346;text-align:center;font-size:13.500px;line-height:24px;color:#217346">Sheet1</div>
<svg class="i" style="left:205px;top:722px" width="18" height="18" viewBox="0 0 18 18"><circle cx="9" cy="9" r="7.500" fill="none" stroke="#888" stroke-width="1.300"/><path d="M9 5v8M5 9h8" stroke="#777" stroke-width="1.800"/></svg>
<div class="a" style="left:819px;top:726px;width:3px;height:3px;background:#aaa;box-shadow:0 4px #aaa,0 8px #aaa"></div>
<div class="a" style="left:836px;top:724px;width:505px;height:15px;background:#dadada"></div>
<div class="box" style="left:836px;top:724px;width:15px;height:15px"></div>
<div class="a" style="left:841px;top:728px;border-top:4px solid transparent;border-bottom:4px solid transparent;border-right:4px solid #666"></div>
<div class="box" style="left:851px;top:724px;width:439px;height:15px;border-width:2px 1px 1px 2px"></div>
<div class="box" style="left:1332px;top:724px;width:15px;height:15px"></div>
<div class="a" style="left:1338px;top:728px;border-top:4px solid transparent;border-bottom:4px solid transparent;border-left:4px solid #666"></div>

<!-- status bar -->
<div class="a" style="left:0;top:745px;width:1366px;height:21px;background:#f1f1f1;border-top:1px solid #c6c6c6;box-sizing:border-box"></div>
<div class="t" style="left:8px;top:748px;font-size:12px;color:#555">準備完了</div>
<svg class="i" style="left:75px;top:749px" width="14" height="14" viewBox="0 0 14 14"><circle cx="3" cy="3" r="2.500" fill="#555"/><path d="M5 2h8v11H1V6" fill="none" stroke="#555" stroke-width="1.200"/><path d="M3 7h9M3 9h9M3 11h9" stroke="#555" stroke-dasharray="2 1"/></svg>
<div class="a" style="left:1068px;top:746px;width:38px;height:20px;background:#c6c6c6"></div>
<svg class="i" style="left:1080px;top:749px" width="14" height="14" viewBox="0 0 14 14"><path d="M.5.500h12v12H.500zM4.500.500v12M8.500.500v12M.500 4.500h12M.500 8.500h12" fill="none" stroke="#666"/></svg>
<svg class="i" style="left:1118px;top:749px" width="14" height="14" viewBox="0 0 14 14"><path d="M.5.500h13v12H.500zM3.500 3.500h7v6h-7zM5 5.500h4M5 7.500h4" fill="none" stroke="#666"/></svg>
<svg class="i" style="left:1156px;top:749px" width="14" height="14" viewBox="0 0 14 14"><path d="M.5.500h13v12H.500zM4.500.500v7h5v-7M.500 7.500h4" fill="none" stroke="#666"/></svg>
<div class="a" style="left:1187px;top:755px;width:6px;height:2px;background:#666"></div>
<div class="a" style="left:1197px;top:755px;width:100px;height:1px;background:#999"></div>
<div class="a" style="left:1245px;top:750px;width:4px;height:11px;background:#666"></div>
<div class="a" style="left:1301px;top:755px;width:8px;height:2px;background:#666"></div>
<div class="a" style="left:1304px;top:752px;width:2px;height:8px;background:#666"></div>
<div class="t" style="left:1325px;top:748px;font-size:12.500px;color:#666">100%</div>
<div class="a" style="left:0;top:766px;width:1366px;height:2px;background:#1a1a1a"></div>
</body></html>
